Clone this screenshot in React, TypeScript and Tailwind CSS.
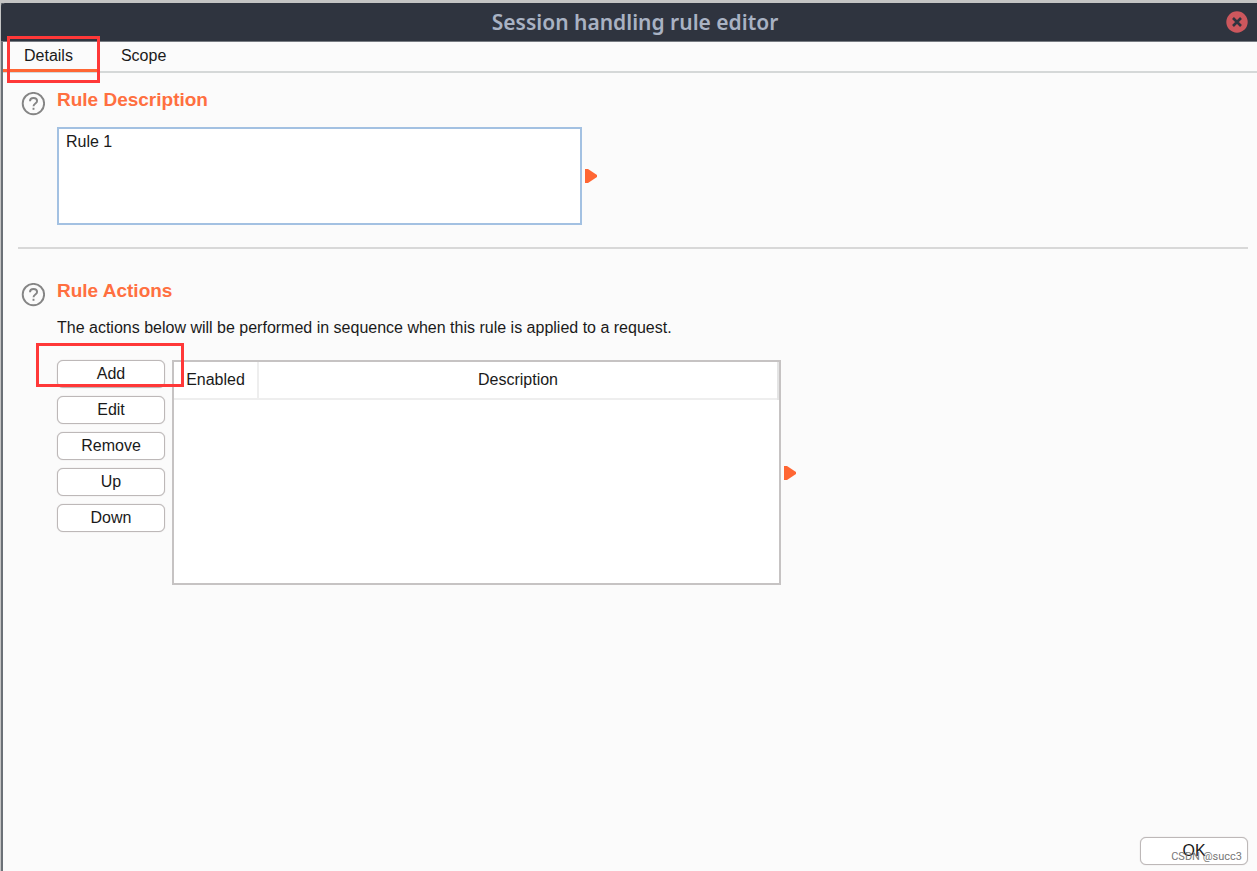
import { useState } from "react";

type Tab = "Details" | "Scope";

const tabs: Tab[] = ["Details", "Scope"];
const actions = ["Add", "Edit", "Remove", "Up", "Down"];

function HelpButton({ label }: { label: string }) {
  return (
    <button type="button" aria-label={label} className="mt-1 h-6 w-6 flex-shrink-0">
      <svg viewBox="0 0 24 24" className="h-6 w-6" fill="none" stroke="#858585" strokeWidth="1.9">
        <circle cx="12.4" cy="11.6" r="10.7" />
        <path d="M9 9.2C9 7.3 10.4 6 12.5 6s3.6 1.3 3.6 3.1c0 2.4-3.6 2.6-3.6 5.2" />
        <path d="M12.5 15.8v2" />
      </svg>
    </button>
  );
}

function ExpandArrow({ label }: { label: string }) {
  return (
    <button type="button" aria-label={label} className="h-4 w-3 flex-shrink-0">
      <svg viewBox="0 0 12 16" className="h-4 w-3">
        <path d="M0 1h3l9 6v2l-9 6H0z" fill="#ff6633" />
      </svg>
    </button>
  );
}

function DialogButton({ children }: { children: string }) {
  return (
    <button
      type="button"
      className="flex h-7 w-27 items-center justify-center rounded-md border border-[#bdb8b8] bg-white shadow-[0_0_1px_#bdb8b8]"
    >
      {children}
    </button>
  );
}

export default function App() {
  const [tab, setTab] = useState<Tab>("Details");
  const [description, setDescription] = useState("Rule 1");

  return (
    <div className="flex min-h-screen flex-col border-t-[3px] border-l border-[#c4c4c4] font-['Liberation_Sans',sans-serif] text-[16px] leading-5 text-[#1a1a1a]">
      <div className="flex flex-1 flex-col border-l-2 border-[#6b7177] bg-[#fbfbfb]">
        <header className="-ml-0.5 grid h-[39px] grid-cols-[1fr_auto_1fr] items-center rounded-tl border-b border-[#777b82] bg-[#2f343f] pr-2 pl-5">
          <span />
          <h1 className="font-['Noto_Sans',sans-serif] text-[21px] leading-7 font-semibold text-[#a9b2c3]">
            Session handling rule editor
          </h1>
          <button type="button" aria-label="Close" className="h-6 w-6 justify-self-end">
            <svg viewBox="0 0 24 24" className="h-6 w-6">
              <circle cx="12" cy="12" r="10.7" fill="#cc575d" />
              <path d="M8 8l8 8M16 8l-8 8" stroke="#2f343f" strokeWidth="2.6" />
            </svg>
          </button>
        </header>

        <nav className="flex h-[31px] border-b-2 border-[#d5d8d8]">
          {tabs.map((name) => (
            <div key={name} className="relative flex">
              <button
                type="button"
                onClick={() => setTab(name)}
                className={`h-[30px] border-b-[3px] pr-[27px] pl-[21px] ${
                  tab === name ? "border-[#ff6633]" : "border-transparent"
                }`}
              >
                {name}
              </button>
              {name === "Details" && (
                <span className="pointer-events-none absolute -top-1.5 right-0 -bottom-3 left-1 border-[3px] border-[#ff3838]" />
              )}
            </div>
          ))}
        </nav>

        <main className="flex flex-1 flex-col pr-[9px] pl-[15px]">
          <section className="flex gap-3 border-b-2 border-[#d8d8d8] pt-[15px] pb-[22px] pl-[3px]">
            <HelpButton label="Help on rule description" />
            <div className="min-w-0 flex-1">
              <h2 className="text-[19px] leading-6 font-bold text-[#ff6f40]">
                <label htmlFor="description">Rule Description</label>
              </h2>
              <div className="mt-[15px] flex items-center gap-[3px]">
                <textarea
                  id="description"
                  value={description}
                  onChange={(e) => setDescription(e.target.value)}
                  className="h-[98px] w-[525px] resize-none border-2 border-[#a3c1e2] bg-white px-[7px] py-[3px] outline-none"
                />
                <ExpandArrow label="Expand description" />
              </div>
            </div>
          </section>

          <section className="flex gap-3 pt-[30px] pl-[3px]">
            <HelpButton label="Help on rule actions" />
            <div className="min-w-0 flex-1">
              <h2 className="text-[19px] leading-6 font-bold text-[#ff6f40]">Rule Actions</h2>
              <p className="mt-[15px]">
                The actions below will be performed in sequence when this rule is applied to a request.
              </p>
              <div className="mt-[22px] flex gap-[7px]">
                <div className="relative flex flex-col gap-2">
                  {actions.map((action) => (
                    <DialogButton key={action}>{action}</DialogButton>
                  ))}
                  <span className="pointer-events-none absolute -top-[17px] -right-[19px] -left-[21px] h-11 border-[3px] border-[#ff3838]" />
                </div>
                <div className="flex items-center gap-[3px]">
                  <div className="h-[225px] w-[609px] border-2 border-[#c6c3c3] bg-white">
                    <table className="w-full table-fixed border-collapse">
                      <thead>
                        <tr className="h-[37px] border-b-2 border-[#eeeeee]">
                          <th className="w-[84px] border-r-2 border-[#eeeeee] font-normal">Enabled</th>
                          <th className="border-r-2 border-[#e4e4e4] font-normal">Description</th>
                        </tr>
                      </thead>
                    </table>
                  </div>
                  <ExpandArrow label="Expand actions" />
                </div>
              </div>
            </div>
          </section>

          <footer className="relative mt-auto flex justify-end pb-1.5">
            <DialogButton>OK</DialogButton>
            <span className="pointer-events-none absolute right-1.5 bottom-1.5 font-[Roboto,sans-serif] text-[11px] leading-4 text-[#777777]">
              CSDN @succ3
            </span>
          </footer>
        </main>
      </div>
    </div>
  );
}
